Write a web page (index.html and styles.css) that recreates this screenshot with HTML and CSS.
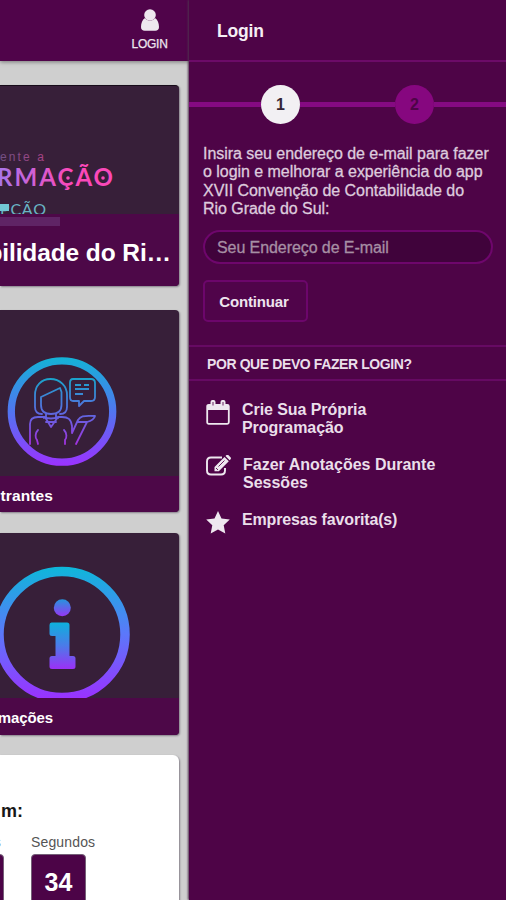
FILE: index.html
```html
<!DOCTYPE html>
<html lang="pt-BR">
<head>
<meta charset="utf-8">
<title>Login</title>
<link rel="stylesheet" href="styles.css">
</head>
<body>
<div class="app">
  <main class="home">
    <header class="home-bar">
      <div class="user">
        <svg class="user-icon" width="20" height="23" viewBox="0 0 20 23"><circle cx="10" cy="6" r="5.800"/><path d="M5 9C2.300 10.700 1 14 1 18c0 2.500 1.500 3.800 3.700 3.800h10.600c2.200 0 3.700-1.300 3.700-3.800 0-4-1.300-7.300-4-9-2.600 3.700-7.400 3.700-10 0z"/></svg>
        <span class="user-label">LOGIN</span>
      </div>
    </header>
    <section class="card hero">
      <svg class="art" width="179" height="128" viewBox="0 0 179 128">
        <defs>
          <linearGradient id="pink" gradientUnits="userSpaceOnUse" x1="-10" y1="0" x2="70" y2="0"><stop offset="0" stop-color="#9d7cf2"/><stop offset="1" stop-color="#fb48b9"/></linearGradient>
          <linearGradient id="small" gradientUnits="userSpaceOnUse" x1="0" y1="0" x2="44" y2="0"><stop offset="0" stop-color="#715184"/><stop offset="1" stop-color="#a84286"/></linearGradient>
        </defs>
        <text class="art-small" x="0" y="75" textLength="44" fill="url(#small)">ente a</text>
        <text class="art-title" x="-3" y="100" textLength="116" fill="url(#pink)">RMAÇÃO</text>
        <circle cx="68" cy="92" r="1.800" fill="#f64dbd"/><circle cx="103" cy="92" r="1.800" fill="#fb48b9"/>
        <text class="art-sub" x="0" y="129" textLength="46">PÇÃO</text>
        <rect class="art-block" x="0" y="118" width="9" height="7"/>
      </svg>
      <div class="caption hero-caption"><i class="ghost"></i><span class="hero-title">bilidade do Ri…</span></div>
    </section>
    <section class="card speakers">
      <svg class="art" width="179" height="166" viewBox="0 0 179 166">
        <defs>
          <linearGradient id="ring" gradientUnits="userSpaceOnUse" x1="0" y1="47" x2="0" y2="156"><stop offset="0" stop-color="#13b3d6"/><stop offset=".5" stop-color="#5175f0"/><stop offset="1" stop-color="#9b32ff"/></linearGradient>
          <linearGradient id="fig" gradientUnits="userSpaceOnUse" x1="0" y1="68" x2="0" y2="136"><stop offset="0" stop-color="#1aa4cb"/><stop offset=".5" stop-color="#5a6be0"/><stop offset="1" stop-color="#a52fe0"/></linearGradient>
        </defs>
        <circle cx="62" cy="101.500" r="50.700" fill="none" stroke="url(#ring)" stroke-width="7.300"/>
        <g fill="none" stroke="url(#fig)" stroke-width="1.800" stroke-linecap="round" stroke-linejoin="round">
          <path d="M42 104c-5 0-7-3-7-7V85c0-9 6-16 15.500-16S67 76 67 85v12c0 4-2 7-7 7"/>
          <path d="M41 87l19-9 1.500 4v13c0 6-4 9-10.500 9S41 101 41 95zM46 104v3l-2 1M56 104v3l2 1"/>
          <path d="M45 107l6 10 7-10M30 134V114c0-6 4-7 8-7h6q7 3 14 0h4c6 0 9 2 10 9v7l6-13c3-5 7-4 17-4-1 4-4 5-8 6H78M87 112l-11 22"/>
          <path d="M46 112h10M38 120c-3 3-3 8-1 10l1 4M64 120c3 3 3 8 1 10v4"/>
          <path d="M73 69h18q4 0 4 4v14q0 4-4 4h-7l-5 5v-5h-6q-3 0-3-4V73q0-4 3-4z"/>
          <path d="M75 75h6M84 75h5M75 79h14M75 84h8" stroke-width="2.200" stroke-linecap="butt"/>
        </g>
      </svg>
      <div class="caption"><span class="name tight">trantes</span></div>
    </section>
    <section class="card info">
      <svg class="art" width="179" height="165" viewBox="0 0 179 165">
        <defs>
          <linearGradient id="ring2" gradientUnits="userSpaceOnUse" x1="0" y1="34" x2="0" y2="167"><stop offset="0" stop-color="#0eb7da"/><stop offset=".5" stop-color="#5b78fa"/><stop offset="1" stop-color="#9b30ff"/></linearGradient>
          <linearGradient id="dot" x1="0" y1="0" x2="0" y2="1"><stop offset="0" stop-color="#2595dd"/><stop offset="1" stop-color="#9636f4"/></linearGradient>
          <linearGradient id="stem" x1="0" y1="0" x2="0" y2="1"><stop offset="0" stop-color="#0db0dc"/><stop offset=".5" stop-color="#4b7be9"/><stop offset="1" stop-color="#9b30f6"/></linearGradient>
        </defs>
        <circle cx="62" cy="101.500" r="63" fill="none" stroke="url(#ring2)" stroke-width="9.500"/>
        <circle cx="62.300" cy="74.700" r="8.500" fill="url(#dot)"/>
        <path d="M51.500 89.500H67q2.500 0 2.500 2.500v31H73q2.500 0 2.500 2.500v8q0 2.500-2.500 2.500H52q-2.500 0-2.500-2.500v-8q0-2.500 2.500-2.500h3.500v-20H52q-2.500 0-2.500-2.500V92q0-2.500 2-2.500z" fill="url(#stem)"/>
      </svg>
      <div class="caption"><span class="name">mações</span></div>
    </section>
    <section class="card countdown">
      <div class="count-title">m:</div>
      <div class="units">
        <div class="unit"><span class="unit-label">s</span><span class="tile"></span></div>
        <div class="unit"><span class="unit-label">Segundos</span><span class="tile">34</span></div>
      </div>
    </section>
  </main>
  <aside class="panel">
    <header class="panel-bar"><h1>Login</h1></header>
    <div class="steps"><i class="line before"></i><b class="step on">1</b><i class="line between"></i><b class="step">2</b><i class="line after"></i></div>
    <div class="form">
      <p><span class="l1">Insira seu endereço de e-mail para fazer</span><br><span class="l2">o login e melhorar a experiência do app</span><br><span class="l3">XVII Convenção de Contabilidade do</span><br><span class="l4">Rio Grade do Sul:</span></p>
      <div class="field">Seu Endereço de E-mail</div>
      <button class="go">Continuar</button>
    </div>
    <h2>POR QUE DEVO FAZER LOGIN?</h2>
    <ul class="reasons">
      <li>
        <svg class="ico" width="24" height="26" viewBox="0 0 24 26"><rect x="1.200" y="4.800" width="21.600" height="19" rx="1.500" fill="none" stroke="#eee8ef" stroke-width="1.800"/><path d="M1 5h22v5H1z"/><rect x="4.500" y="0" width="5" height="7" rx="2"/><rect x="14.500" y="0" width="5" height="7" rx="2"/><path d="M7 2v3.500M17 2v3.500" stroke="#67205f" stroke-width="1"/></svg>
        <span class="r1">Crie Sua Própria<br>Programação</span>
      </li>
      <li>
        <svg class="ico" width="25" height="22" viewBox="0 0 25 22"><path d="M16 2.500H5Q1 2.500 1 6.500v9q0 4 4 4h10q4 0 4-4V13" fill="none" stroke="#eee8ef" stroke-width="1.900"/><path d="M8.500 12L18.500 2l4.300 4.300-10 10H8.500zM19.500 1l1-1q1-.7 2 .2l2 2q.9 1 .1 2l-1 1z"/><path d="M10 13l2 2M12.500 11.500l6-6" stroke="#67205f" stroke-width="1"/></svg>
        <span class="r2">Fazer Anotações Durante<br>Sessões</span>
      </li>
      <li>
        <svg class="ico star" width="24" height="23" viewBox="0 0 24 23"><path d="M12 0l3.500 7.600 8.300 1-6.100 5.700 1.600 8.300L12 18.500l-7.300 4.100 1.600-8.300L.2 8.600l8.300-1z"/></svg>
        <span class="r3">Empresas favorita(s)</span>
      </li>
    </ul>
  </aside>
</div>
</body>
</html>
```

FILE: styles.css
```css
* { box-sizing: border-box; }
body { margin: 0; font-family: "Liberation Sans", Arial, sans-serif; background: #4e0447; }
.app { display: flex; width: 506px; height: 900px; overflow: hidden; }
.home { width: 189px; flex: none; background: #cfcfcf; display: flex; flex-direction: column; overflow: hidden; }
.home-bar { width: 190px; height: 61px; flex: none; background: #50044a; display: flex; justify-content: flex-end; padding: 9px 22px 0 0; box-shadow: 0 1px 4px #777; }
.user { display: flex; flex-direction: column; align-items: center; width: 37px; }
.user-icon, .ico { fill: #eee8ef; flex: none; }
.user-label { color: #eee6ef; font-size: 12px; line-height: 14px; margin-top: 5px; letter-spacing: -.25px; -webkit-text-stroke: .25px #eee6ef; }
.card { width: 179px; flex: none; display: flex; flex-direction: column; background: #371f39; border-radius: 0 4px 4px 0; overflow: hidden; box-shadow: 1px 1px 2px #85808a; }
.art { display: block; flex: none; }
.hero { height: 201px; margin-top: 24px; border-top: 1px solid #170b19; }
.art-small { font-size: 12px; }
.art-title { font: bold 24px Lato, sans-serif; }
.art-sub { font: 16px Lato, sans-serif; fill: #6ab4c4; }
.art-block { fill: #72c8d4; }
.caption { background: #4d0848; flex: 1; color: #fff; font-weight: bold; display: flex; align-items: center; }
.hero-caption { flex-direction: column; align-items: flex-start; }
.ghost { width: 60px; height: 9px; margin-top: 3px; background: #5f2465; }
.hero-title { width: 171px; margin-top: 12px; font-size: 24.500px; line-height: 29px; letter-spacing: -.1px; white-space: nowrap; display: flex; justify-content: flex-end; }
.speakers { height: 202px; margin-top: 24px; }
.info { height: 202px; margin-top: 21px; }
.name { width: 53px; display: flex; justify-content: flex-end; font-size: 15px; line-height: 18px; padding-top: 3px; }
.tight { font-size: 15.500px; letter-spacing: .1px; }
.name:not(.tight) { letter-spacing: -.1px; }
.countdown { background: #fff; height: 160px; margin-top: 20px; border-radius: 0 6px 0 0; }
.count-title { width: 23px; display: flex; justify-content: flex-end; margin-top: 45px; font-size: 18px; line-height: 22px; font-weight: bold; color: #171717; }
.units { display: flex; margin: 12px 0 0 -51px; gap: 27px; }
.unit { width: 55px; display: flex; flex-direction: column; }
.unit-label { font-size: 14px; line-height: 16px; color: #555; white-space: nowrap; letter-spacing: .15px; }
.unit:first-child .unit-label { align-self: flex-end; margin-right: 3px; }
.tile { height: 60px; margin-top: 4px; border-radius: 4px; background: #4c0447; border: 1px solid #756078; color: #fff; font-weight: bold; font-size: 25px; line-height: 54px; text-align: center; }
.panel { flex: 1; background: #4e0447; display: flex; flex-direction: column; box-shadow: -1px 0 2px #50304e; z-index: 1; }
.panel-bar { height: 62px; border-bottom: 2px solid #6c0b68; padding: 21px 28px 0; }
h1 { margin: 0; font-size: 17.500px; line-height: 20px; color: #f5eff5; letter-spacing: -.2px; }
.steps { display: flex; align-items: center; height: 40px; margin-top: 22px; }
.line { height: 5px; background: #850a82; }
.before { width: 72px; }
.between { width: 95px; }
.after { flex: 1; }
.step { width: 39px; height: 39px; border-radius: 50%; background: #86077f; color: #4e0447; font-size: 16px; line-height: 39px; text-align: center; }
.step.on { background: #f2f0f3; color: #352536; }
.form { padding: 20px 13px 0 14px; }
p { margin: 0; font-size: 16px; line-height: 18.300px; color: #ddcbdd; white-space: nowrap; -webkit-text-stroke: .3px #ddcbdd; padding-top: 1px; letter-spacing: -.04px; }
.field { width: 290px; height: 34px; margin-top: 12px; border: 2px solid #6e066c; border-radius: 17px; background: #40033b; padding: 0 12px; color: #a68fa4; font-size: 16px; line-height: 32px; letter-spacing: -.08px; white-space: nowrap; -webkit-text-stroke: .3px #a68fa4; }
.go { display: block; margin: 16px 0 0; width: 105px; height: 42px; padding: 0 3px 0 0; border: 2px solid #6c066b; border-radius: 5px; background: #50044a; font: bold 15px "Liberation Sans", sans-serif; letter-spacing: -.15px; color: #eee4ee; }
h2 { height: 36px; margin: 23px 0 0; border-top: 2px solid #660a63; border-bottom: 2px solid #660a63; padding-left: 18px; font-size: 14px; line-height: 35px; letter-spacing: -.4px; color: #eadfea; white-space: nowrap; }
.reasons { list-style: none; margin: 19px 0 0; padding: 0 0 0 17px; display: flex; flex-direction: column; gap: 18px; color: #eadfea; font-size: 16px; font-weight: bold; line-height: 18.300px; }
.reasons li { display: flex; gap: 12px; white-space: nowrap; }
.reasons span { padding-top: 1px; margin-bottom: -1px; }
.reasons .r1 { letter-spacing: -.07px; }
.reasons .r3 { letter-spacing: -.15px; padding-top: 2px; }
.star { margin-top: 2px; }
```
